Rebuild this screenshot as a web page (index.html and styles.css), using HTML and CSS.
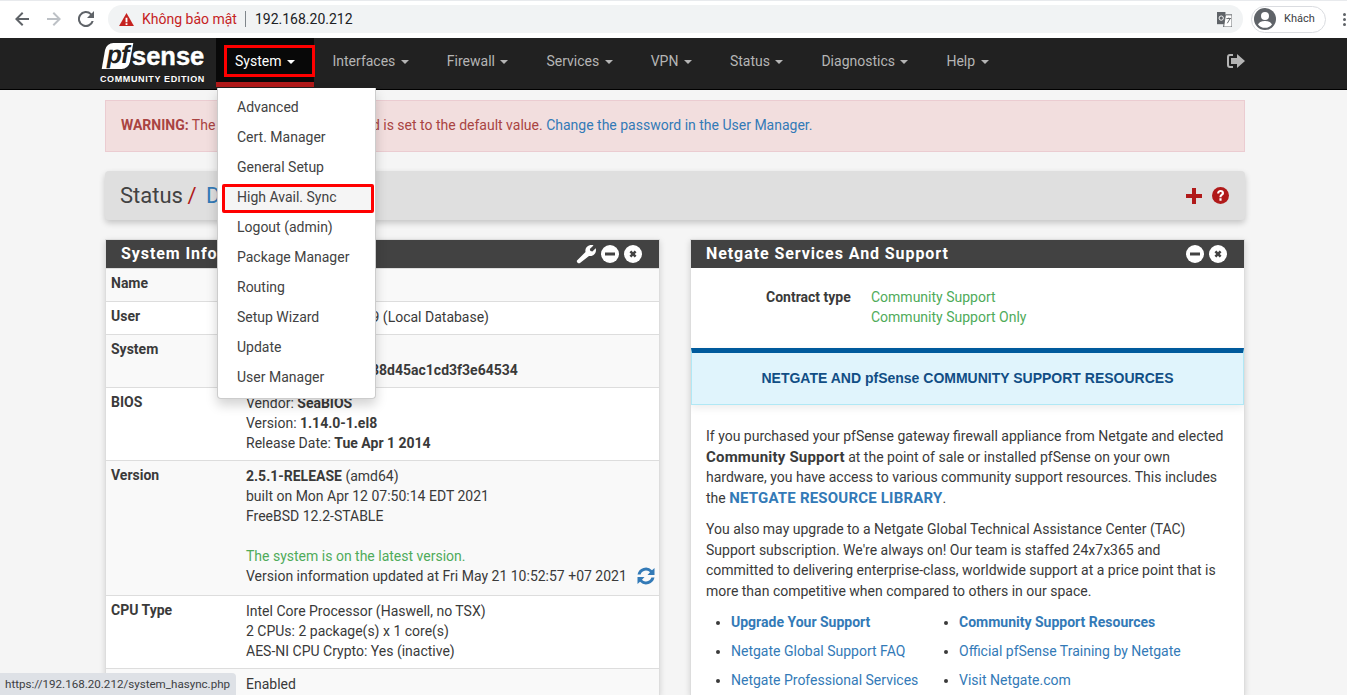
FILE: index.html
```html
<!DOCTYPE html>
<html lang="vi">
<head>
    <meta charset="UTF-8">
    <title>pfSense.home.arpa - Status: Dashboard</title>
    <link rel="stylesheet" href="styles.css">
</head>
<body>
    <div class="chrome">
        <svg class="chrome-btn" viewBox="0 0 16 16"><path d="M15 7H4.8l4.6-4.6L8 1 1 8l7 7 1.4-1.4L4.8 9H15z" fill="#5f6368"/></svg>
        <svg class="chrome-btn" viewBox="0 0 16 16"><path d="M1 7h10.2L6.6 2.4 8 1l7 7-7 7-1.4-1.4L11.2 9H1z" fill="#bdc1c6"/></svg>
        <svg class="chrome-btn" viewBox="0 0 16 16"><path d="M13.6 2.4A8 8 0 1 0 15.7 10h-2.1a6 6 0 1 1-1.4-6.2L9 7h7V0z" fill="#5f6368"/></svg>
        <div class="omnibox">
            <svg class="warn" viewBox="0 0 16 14"><path d="M8 0l8 14H0z" fill="#c5221f"/><path d="M7 5h2v5H7zM7 11h2v2H7z" fill="#fff"/></svg>
            <span class="warn-text">Không bảo mật</span>
            <span class="url">192.168.20.212</span>
            <svg class="translate" viewBox="0 0 16 16"><path d="M0 0h9v13H0z" fill="#5f6368"/><path d="M9 3h7v13H7z" fill="#fff" stroke="#5f6368"/><circle cx="4.500" cy="6.500" r="2.300" fill="none" stroke="#fff"/><path d="M10 7h5M12.500 6v1M11 12l3-5" stroke="#5f6368" fill="none"/></svg>
        </div>
        <div class="profile">
            <svg viewBox="0 0 22 22"><circle cx="11" cy="11" r="11" fill="#5f6368"/><circle cx="11" cy="8" r="4" fill="#fff"/><path d="M4 16.500c1.500-3 4.500-3.500 7-3.500s5.500.5 7 3.500a9 9 0 0 1-14 0z" fill="#fff"/></svg>
            <span>Khách</span>
        </div>
        <div class="kebab"><i></i><i></i><i></i></div>
    </div>

    <nav class="navbar">
        <a class="brand">
            <span class="brand-top"><span class="brand-pf">pf</span><span class="brand-sense">sense</span></span>
            <span class="brand-sub">COMMUNITY EDITION</span>
        </a>
        <ul class="nav-list">
            <li class="nav-item active"><span class="nav-mark">System <b class="caret"></b></span>
                <ul class="dropdown">
                    <li>Advanced</li>
                    <li>Cert. Manager</li>
                    <li>General Setup</li>
                    <li class="marked">High Avail. Sync</li>
                    <li>Logout (admin)</li>
                    <li>Package Manager</li>
                    <li>Routing</li>
                    <li>Setup Wizard</li>
                    <li>Update</li>
                    <li>User Manager</li>
                </ul>
            </li>
            <li class="nav-item">Interfaces <b class="caret"></b></li>
            <li class="nav-item">Firewall <b class="caret"></b></li>
            <li class="nav-item">Services <b class="caret"></b></li>
            <li class="nav-item">VPN <b class="caret"></b></li>
            <li class="nav-item">Status <b class="caret"></b></li>
            <li class="nav-item">Diagnostics <b class="caret"></b></li>
            <li class="nav-item">Help <b class="caret"></b></li>
        </ul>
        <svg class="logout" viewBox="0 0 18 16"><path d="M6 1H3a3 3 0 0 0-3 3v8a3 3 0 0 0 3 3h3v-2H3a1 1 0 0 1-1-1V4a1 1 0 0 1 1-1h3z" fill="#b5b5b5"/><path d="M10 1l8 7-8 7v-4H4V5h6z" fill="#b5b5b5"/></svg>
    </nav>

    <div class="container">
        <div class="alert"><strong>WARNING:</strong> The 'admin' account password is set to the default value. <a>Change the password in the User Manager.</a></div>

        <div class="page-header">
            <h1>Status <span class="slash">/</span> <a>Dashboard</a></h1>
            <div class="header-icons">
                <svg viewBox="0 0 16 16" width="16" height="16"><path d="M6 0h4v6h6v4h-6v6H6v-6H0V6h6z" fill="#b01a1a"/></svg>
                <svg viewBox="0 0 16 16" width="17" height="17"><circle cx="8" cy="8" r="8" fill="#b01a1a"/><path d="M4.800 6c0-2 1.400-3.200 3.300-3.200S11.300 4 11.300 5.700c0 2.300-2.300 2.300-2.300 3.900H7c0-2.700 2.200-2.800 2.200-3.900 0-.5-.5-.9-1.100-.9-.7 0-1.200.4-1.300 1.200zM7 10.700h2v2.200H7z" fill="#fff"/></svg>
            </div>
        </div>

        <div class="columns">
            <section class="panel">
                <div class="panel-head">
                    <h2>System Information</h2>
                    <div class="panel-icons">
                        <svg viewBox="0 0 20 20" width="20" height="20"><path d="M1 16.500L9.500 8C8.700 4.500 11.500 1 15.500 1c.8 0 1.500.2 2 .4L13.800 5l.6 2 2 .6 3.300-3.400c.3.600.3 1.300.3 1.800 0 4-3.500 6.700-7 6L4 19c-1.200 1-4 -1-3-2.500z" fill="#fff"/></svg>
                        <svg viewBox="0 0 18 18" width="18" height="18"><circle cx="9" cy="9" r="9" fill="#fff"/><rect x="4" y="7.500" width="10" height="3" fill="#424242"/></svg>
                        <svg viewBox="0 0 18 18" width="18" height="18"><circle cx="9" cy="9" r="9" fill="#fff"/><path d="M5.500 7.300L7.300 5.500 9 7.200l1.700-1.700 1.800 1.800L10.800 9l1.700 1.700-1.800 1.800L9 10.800l-1.700 1.700-1.800-1.800L7.200 9z" fill="#424242"/></svg>
                    </div>
                </div>
                <table class="info">
                    <tr><th>Name</th><td>pfSense.home.arpa</td></tr>
                    <tr><th>User</th><td>admin@192.168.20.9 (Local Database)</td></tr>
                    <tr><th>System</th><td>KVM Guest<br>Netgate Device ID: <b>c38d45ac1cd3f3e64534</b></td></tr>
                    <tr><th>BIOS</th><td>Vendor: <b>SeaBIOS</b><br>Version: <b>1.14.0-1.el8</b><br>Release Date: <b>Tue Apr 1 2014</b></td></tr>
                    <tr><th>Version</th><td><b>2.5.1-RELEASE</b> (amd64)<br>built on Mon Apr 12 07:50:14 EDT 2021<br>FreeBSD 12.2-STABLE<br><br><span class="green">The system is on the latest version.</span><br>
                        <span class="update-line">Version information updated at Fri May 21 10:52:57 +07 2021
                        <svg viewBox="0 0 20 20" width="20" height="20"><path d="M1.500 8.500A8.600 8.600 0 0 1 16 4.200L18.500 2v7h-7l2.500-2.700a5.600 5.600 0 0 0-9.400 2.200z" fill="#337ab7"/><path d="M18.500 11.500A8.600 8.600 0 0 1 4 15.800L1.500 18v-7h7L6 13.700a5.600 5.600 0 0 0 9.400-2.200z" fill="#337ab7"/></svg></span></td></tr>
                    <tr><th>CPU Type</th><td>Intel Core Processor (Haswell, no TSX)<br>2 CPUs: 2 package(s) x 1 core(s)<br>AES-NI CPU Crypto: Yes (inactive)</td></tr>
                    <tr><th>Kernel PTI</th><td>Enabled</td></tr>
                </table>
            </section>

            <section class="panel">
                <div class="panel-head">
                    <h2>Netgate Services And Support</h2>
                    <div class="panel-icons">
                        <svg viewBox="0 0 18 18" width="18" height="18"><circle cx="9" cy="9" r="9" fill="#fff"/><rect x="4" y="7.500" width="10" height="3" fill="#424242"/></svg>
                        <svg viewBox="0 0 18 18" width="18" height="18"><circle cx="9" cy="9" r="9" fill="#fff"/><path d="M5.500 7.300L7.300 5.500 9 7.200l1.700-1.700 1.800 1.800L10.800 9l1.700 1.700-1.800 1.800L9 10.800l-1.700 1.700-1.800-1.800L7.200 9z" fill="#424242"/></svg>
                    </div>
                </div>
                <div class="contract">
                    <b>Contract type</b>
                    <span class="green">Community Support<br>Community Support Only</span>
                </div>
                <div class="resources">NETGATE AND pfSense COMMUNITY SUPPORT RESOURCES</div>
                <div class="support-text">
                    <p>If you purchased your pfSense gateway firewall appliance from Netgate and elected <b class="big">Community Support</b> at the point of sale or installed pfSense on your own hardware, you have access to various community support resources. This includes the <a><b class="big">NETGATE RESOURCE LIBRARY</b></a>.</p>
                    <p>You also may upgrade to a Netgate Global Technical Assistance Center (TAC) Support subscription. We're always on! Our team is staffed 24x7x365 and committed to delivering enterprise-class, worldwide support at a price point that is more than competitive when compared to others in our space.</p>
                    <div class="link-cols">
                        <ul>
                            <li><a><b>Upgrade Your Support</b></a></li>
                            <li><a>Netgate Global Support FAQ</a></li>
                            <li><a>Netgate Professional Services</a></li>
                        </ul>
                        <ul>
                            <li><a><b>Community Support Resources</b></a></li>
                            <li><a>Official pfSense Training by Netgate</a></li>
                            <li><a>Visit Netgate.com</a></li>
                        </ul>
                    </div>
                </div>
            </section>
        </div>
    </div>

    <div class="status-url">https://192.168.20.212/system_hasync.php</div>
</body>
</html>
```

FILE: styles.css
```css
* {
    box-sizing: border-box;
}
html, body {
    height: 695px;
    overflow: hidden;
}
body {
    margin: 0;
    background: #f5f5f5;
    font-family: Roboto, sans-serif;
    font-size: 14px;
    line-height: 20px;
    color: #3a3a3a;
}
ul {
    list-style: none;
    margin: 0;
    padding: 0;
}
a {
    color: #337ab7;
}

/* browser bar */
.chrome {
    height: 38px;
    background: #fff;
    display: flex;
    align-items: center;
    padding: 0 0 1px 14px;
    border-top: 1px solid #e8eaed;
}
.chrome-btn {
    width: 16px;
    height: 16px;
    margin-right: 16px;
}
.omnibox {
    flex: 1;
    height: 28px;
    margin-left: -2px;
    background: #f1f3f4;
    border-radius: 14px;
    display: flex;
    align-items: center;
    padding-left: 11px;
}
.warn {
    width: 15px;
    height: 13px;
    margin-right: 8px;
}
.warn-text {
    color: #c5221f;
    font-size: 14px;
    padding-right: 8px;
    border-right: 1px solid #80868b;
    line-height: 16px;
}
.url {
    margin-left: 9px;
    color: #202124;
    font-size: 14px;
    flex: 1;
}
.translate {
    width: 15px;
    height: 15px;
    margin-right: 11px;
}
.profile {
    width: 75px;
    height: 27px;
    margin-left: 8px;
    border: 1px solid #dadce0;
    border-radius: 14px;
    display: flex;
    align-items: center;
    padding-left: 2px;
    font-size: 11px;
    color: #3c4043;
}
.profile svg {
    width: 22px;
    height: 22px;
    margin-right: 8px;
}
.kebab {
    width: 21px;
    display: flex;
    flex-direction: column;
    align-items: center;
    gap: 2px;
    padding-left: 16px;
}
.kebab i {
    width: 3px;
    height: 3px;
    flex: none;
    border-radius: 50%;
    background: #5f6368;
}

/* top nav */
.navbar {
    height: 52px;
    background: #212121;
    border-bottom: 1px solid #000;
    display: flex;
    padding-left: 99px;
    color: #b5b5b5;
    position: relative;
    z-index: 10;
}
.brand {
    width: 117px;
    display: flex;
    flex-direction: column;
    padding-top: 5px;
}
.brand-top {
    display: flex;
    height: 26px;
    align-items: flex-end;
}
.brand-pf {
    margin-left: 5px;
    width: 27px;
    height: 26px;
    background: #fff;
    transform: skewX(-10deg);
    border-radius: 7px 0 7px 0;
    text-align: center;
    color: #212121;
    font: 700 25px/22px "Liberation Sans", sans-serif;
    letter-spacing: -1px;
}
.brand-sense {
    color: #fff;
    font: 700 25.500px/26px "Liberation Sans", sans-serif;
    -webkit-text-stroke: .4px #fff;
    margin-left: 1px;
}
.brand-sub {
    color: #fff;
    font: 700 9px/12px "Liberation Sans", sans-serif;
    letter-spacing: .62px;
    white-space: nowrap;
    margin: 4px 0 0 1px;
}
.nav-list {
    display: flex;
}
.nav-item {
    padding: 0 19px;
    line-height: 46px;
    white-space: nowrap;
    position: relative;
    height: 51px;
    font-size: 14px;
}
.nav-item.active {
    width: 97.500px;
    padding: 0;
    color: #fff;
    background: #080808;
    border-bottom: 5px solid #b01a1a;
    height: 49px;
}
.nav-mark {
    display: block;
    position: absolute;
    left: 8px;
    top: 7px;
    width: 91px;
    height: 32px;
    border: 3px solid #f00;
    line-height: 26px;
    padding-left: 8px;
    z-index: 2;
}
.caret {
    display: inline-block;
    border-top: 4px solid;
    border-left: 4px solid transparent;
    border-right: 4px solid transparent;
    margin-left: 2px;
    vertical-align: middle;
}
.logout {
    position: absolute;
    left: 1227px;
    top: 15px;
    width: 18px;
    height: 16px;
}
.dropdown {
    position: absolute;
    left: 1px;
    top: 50px;
    width: 159px;
    height: 311px;
    background: #fff;
    border: 1px solid #ccc;
    border-top: 0;
    border-radius: 0 0 4px 4px;
    box-shadow: 0 6px 12px rgba(0,0,0,.175);
    padding-top: 4px;
    color: #424242;
    line-height: 30px;
}
.dropdown li {
    padding-left: 19px;
    height: 30px;
}
.dropdown li.marked {
    background: #f5f5f5;
    outline: 3px solid #f00;
    outline-offset: -3px;
    margin: 2px 1px -1px 4px;
    height: 29px;
    line-height: 26px;
    padding-left: 15px;
    border-radius: 2px;
}

/* page */
.container {
    width: 1140px;
    margin-left: 105px;
    padding-top: 10px;
}
.alert {
    height: 52px;
    background: #f2dede;
    border: 1px solid #ebccd1;
    color: #a94442;
    padding: 14px 15px;
    white-space: nowrap;
}
.page-header {
    height: 49px;
    margin-top: 19px;
    background: #dfdfdf;
    border-radius: 4px;
    box-shadow: 0 3px 6px rgba(0,0,0,.2);
    display: flex;
    align-items: center;
    justify-content: space-between;
    padding: 0 16px 0 15px;
}
.page-header h1 {
    margin: 0;
    font-size: 22px;
    font-weight: 400;
    line-height: 28px;
    color: #424242;
    white-space: nowrap;
}
.slash {
    color: #b01a1a;
    margin: 0 4px 0 -1px;
}
.header-icons {
    display: flex;
    align-items: center;
    gap: 10px;
}
.columns {
    display: grid;
    grid-template-columns: 555px 555px;
    gap: 30px;
    margin-top: 19px;
}
.panel {
    background: #fff;
    border: 1px solid #ddd;
    border-bottom: 0;
    box-shadow: 0 2px 6px rgba(0,0,0,.15);
    height: 456px;
    overflow: hidden;
}
.panel-head {
    height: 28px;
    background: #424242;
    color: #fff;
    display: flex;
    align-items: center;
    justify-content: space-between;
    padding: 0 17px 0 15px;
}
.panel-head h2 {
    margin: 0;
    font-size: 16px;
    font-weight: 700;
    letter-spacing: .92px;
    white-space: nowrap;
}
.panel-icons {
    display: flex;
    align-items: center;
    gap: 5px;
}

/* system table */
.info {
    width: 100%;
    border-collapse: collapse;
    table-layout: fixed;
}
.info th {
    width: 135px;
    font-weight: 700;
    text-align: left;
    vertical-align: top;
    padding: 4px 5px;
}
.info td {
    padding: 5px 5px 7px;
}
.info tr {
    border-top: 1px solid #ddd;
}
.info tr:nth-child(even) {
    background: #fff;
}
.info tr:nth-child(odd) {
    background: #f9f9f9;
}
.update-line {
    display: flex;
    align-items: flex-start;
    height: 22px;
    gap: 9px;
    white-space: nowrap;
}
.update-line svg {
    flex: none;
}
.green {
    color: #4fab5a;
}

/* support panel */
.contract {
    display: flex;
    padding: 19px 0 0 75px;
    height: 80px;
}
.contract b {
    width: 105px;
}
.resources {
    height: 57px;
    background: #e0f4fc;
    border-top: 5px solid #005a9c;
    border-bottom: 1px solid #b0e8f5;
    border-left: 1px solid #b0e8f5;
    border-right: 1px solid #b0e8f5;
    box-shadow: 0 3px 8px rgba(0,0,0,.08);
    color: #114e85;
    font: 700 14px/50px "Liberation Sans", sans-serif;
    text-align: center;
}
.support-text {
    padding: 21px 15px 0;
    line-height: 20.6px;
}
.support-text p {
    margin: 0 0 10.600px;
}
.big {
    font-size: 15px;
    letter-spacing: .2px;
}
.link-cols {
    display: flex;
    margin-top: 10px;
}
.link-cols ul {
    list-style: disc;
    padding-left: 25px;
    width: 228px;
    flex: none;
}
.link-cols li {
    height: 29px;
    white-space: nowrap;
}

.status-url {
    position: absolute;
    left: 0;
    bottom: 0;
    width: 236px;
    height: 22px;
    background: #dee1e6;
    border-radius: 0 4px 0 0;
    color: #3c4043;
    font-size: 11.6px;
    line-height: 23px;
    padding-left: 5px;
    white-space: nowrap;
    z-index: 20;
}
```
